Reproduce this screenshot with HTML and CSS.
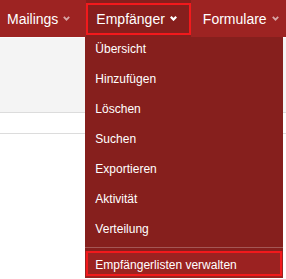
FILE: index.html
```html
<!DOCTYPE html>
<html>
<head>
  <title>Empfänger</title>
  <link rel="stylesheet" href="styles.css">
</head>
<body>
  <div id="topbar">
    <nav id="menu">
      <a class="menu-item">Mailings
        <svg class="chevron" width="7" height="5" viewBox="0 0 7 5"><polyline points="0.8,0.8 3.5,3.6 6.2,0.8"/></svg>
      </a>
      <div class="menu-item open marked">Empfänger
        <svg class="chevron" width="7" height="5" viewBox="0 0 7 5"><polyline points="0.8,0.8 3.5,3.6 6.2,0.8"/></svg>
        <ul id="dropdown">
          <li><a>Übersicht</a></li>
          <li><a>Hinzufügen</a></li>
          <li><a>Löschen</a></li>
          <li><a>Suchen</a></li>
          <li><a>Exportieren</a></li>
          <li><a>Aktivität</a></li>
          <li><a>Verteilung</a></li>
          <li class="divider"></li>
          <li><a class="hover marked">Empfängerlisten verwalten</a></li>
        </ul>
      </div>
      <a class="menu-item">Formulare
        <svg class="chevron" width="7" height="5" viewBox="0 0 7 5"><polyline points="0.8,0.8 3.5,3.6 6.2,0.8"/></svg>
      </a>
    </nav>
  </div>

  <div id="content">
    <div class="content-head"></div>
    <div class="content-row"></div>
  </div>
</body>
</html>
```

FILE: styles.css
```css
body {
  margin: 0;
  padding: 0;
  height: 100vh;
  overflow: hidden;
  background-color: #fff;
  font-family: "Liberation Sans", Arial, sans-serif;
  color: #fff;
}

#topbar {
  background-color: #9d2322; /* main menu red */
  height: 37px;
}

#menu {
  display: flex;
  gap: 2px;
  height: 100%;
}

.menu-item {
  position: relative;
  display: flex;
  align-items: center;
  gap: 5px;
  padding: 0 14px 0 10px;
  font-size: 14px;
  cursor: pointer;
}

.menu-item:first-child {
  padding-left: 7px;
}

.chevron {
  fill: none;
  stroke: rgba(255, 255, 255, 0.6);
  stroke-width: 1.8;
}

.menu-item.open {
  background-color: #861f1d;
}

.menu-item.open .chevron {
  stroke: #fff;
  stroke-width: 2.2;
}

/* red highlight frame drawn over an item */
.marked::after {
  content: "";
  position: absolute;
  top: 3px;
  bottom: 2px;
  left: 0;
  right: 0;
  border: 2px solid #f2191c;
  pointer-events: none;
}

#dropdown {
  position: absolute;
  top: 37px;
  left: -1px;
  width: 198px;
  margin: 0;
  padding: 0;
  list-style: none;
  background-color: #861f1d; /* darker dropdown red */
  z-index: 1;
}

#dropdown a {
  position: relative;
  display: block;
  padding: 3px 10px 9px;
  font-size: 12px;
  line-height: 18px;
  color: #fff;
}

#dropdown .divider {
  height: 1px;
  margin-bottom: 3px;
  background-color: rgba(255, 255, 255, 0.25);
}

#dropdown a.hover {
  background-color: #9b2221;
  padding: 6px 10px 4px;
  line-height: 17px;
}

#dropdown a.marked::after {
  top: 0;
  left: 1px;
  right: 1px;
}

.content-head {
  height: 74px;
  background-color: #f4f4f4;
  border-top: 1px solid #fbfbfb;
  border-bottom: 1px solid #dcdcdc;
}

.content-row {
  height: 20px;
  border-bottom: 1px solid #dcdcdc;
}
```
